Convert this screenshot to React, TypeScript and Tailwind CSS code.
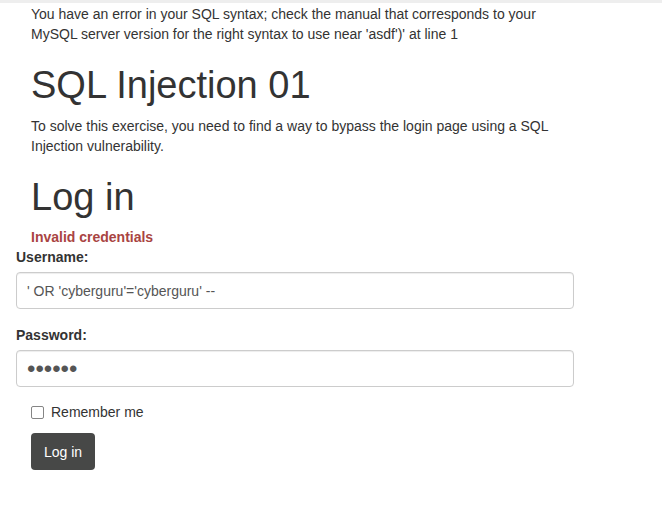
import React from 'react'

const App = () => {
  return (
    <div className="min-h-[508px] bg-white text-[14px] leading-[20px] text-[#333] font-['Liberation_Sans',Arial,sans-serif]">
      <div className="h-[3px] bg-[#eee]" />
      <div className="pl-[16px] pr-[88px]">
        <div className="pl-[15px] pt-[1px]">
          <p>
            You have an error in your SQL syntax; check the manual that corresponds to your MySQL server version for the
            right syntax to use near 'asdf')' at line 1
          </p>
          <h1 className="mt-[20px] text-[38px] leading-[42px]">SQL Injection 01</h1>
          <p className="mt-[10px] pr-[20px]">
            To solve this exercise, you need to find a way to bypass the login page using a SQL Injection vulnerability.
          </p>
          <h1 className="mt-[20px] text-[38px] leading-[42px]">Log in</h1>
          <div className="mt-[9px] font-bold text-[#a94442]">Invalid credentials</div>
        </div>
        <form className="flex flex-col">
          <label className="font-bold">Username:</label>
          <input
            type="text"
            defaultValue="' OR 'cyberguru'='cyberguru' --"
            className="mt-[5px] h-[37px] w-full rounded-[4px] border border-[#ccc] px-[10px] text-[14px] text-[#555] shadow-[inset_0_1px_1px_rgba(0,0,0,0.075)] outline-none"
          />
          <label className="mt-[16px] font-bold">Password:</label>
          <input
            type="password"
            defaultValue="asdfgh"
            className="mt-[5px] h-[37px] w-full rounded-[4px] border border-[#ccc] px-[10px] text-[24px] text-[#555] shadow-[inset_0_1px_1px_rgba(0,0,0,0.075)] outline-none"
          />
          <div className="ml-[15px] mt-[15px] flex items-center gap-[7px]">
            <input
              type="checkbox"
              className="m-0 h-[13px] w-[13px] appearance-none rounded-[2px] border-[1.5px] border-[#858585] bg-white"
            />
            <span>Remember me</span>
          </div>
          <div className="ml-[15px] mt-[11px]">
            <button
              type="button"
              className="h-[37px] rounded-[4px] bg-[#474847] px-[13px] text-[14px] text-white"
            >
              Log in
            </button>
          </div>
        </form>
      </div>
    </div>
  )
}

export default App
